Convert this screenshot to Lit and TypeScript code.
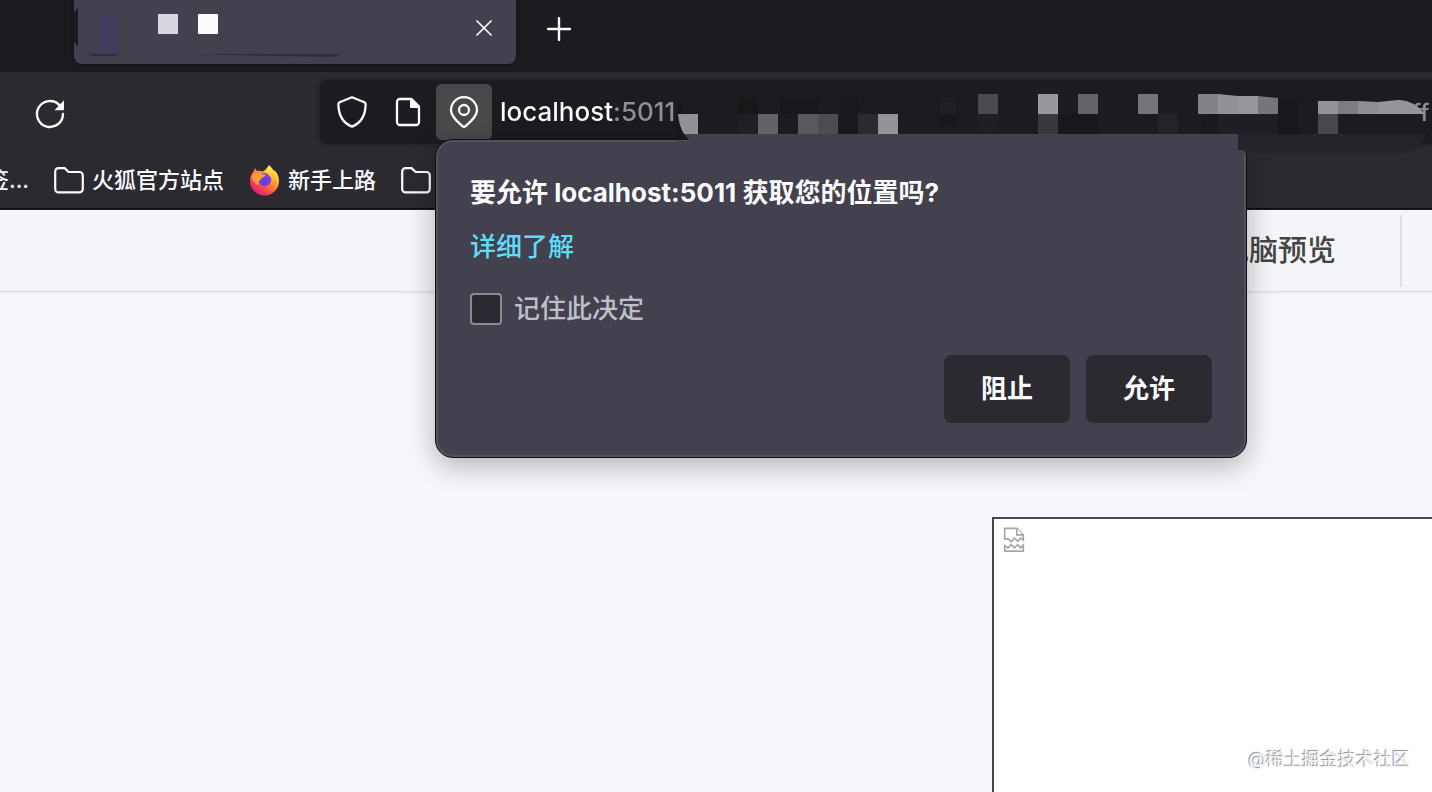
import { LitElement, html, svg, css } from "lit";
import { customElement, state } from "lit/decorators.js";

type Cell = [x: number, y: number, w: number, h: number, fill: string];

/* Mosaic cells that hide the rest of the address. */
const CELLS: Cell[] = [
  [738, 98, 20, 16, "#18181b"],
  [738, 114, 20, 20, "#202024"],
  [758, 114, 20, 20, "#636367"],
  [780, 98, 38, 16, "#18181c"],
  [798, 114, 20, 20, "#5a5a5e"],
  [818, 114, 20, 20, "#4d4d51"],
  [840, 98, 18, 36, "#19191d"],
  [858, 114, 20, 20, "#2b2b2f"],
  [878, 114, 20, 20, "#929297"],
  [940, 98, 16, 16, "#202024"],
  [940, 114, 16, 12, "#18181c"],
  [978, 94, 20, 20, "#49494e"],
  [978, 114, 20, 20, "#1f1e23"],
  [1038, 94, 20, 20, "#97979c"],
  [1038, 114, 20, 20, "#38383c"],
  [1058, 114, 40, 20, "#17171c"],
  [1078, 94, 20, 20, "#636368"],
  [1138, 94, 20, 20, "#74747a"],
  [1158, 114, 20, 20, "#242428"],
  [1202, 114, 16, 20, "#19191e"],
  [1218, 114, 60, 20, "#1e1e24"],
  [1278, 100, 20, 34, "#18181c"],
  [1318, 114, 20, 20, "#47474c"],
  [1338, 114, 82, 20, "#1b1b20"],
];

const folderIcon = html`<svg class="folder" viewBox="0 0 30 27" aria-hidden="true">
  <path d="M1.2 22V4.4A3.2 3.2 0 0 1 4.4 1.2H10.6L14.6 5H25.4A3.4 3.4 0 0 1 28.8 8.4V22A3.4 3.4 0 0 1 25.4 25.4H4.6A3.4 3.4 0 0 1 1.2 22Z"
    fill="none" stroke="#fbfbfe" stroke-width="2.2"/></svg>`;

const firefoxIcon = html`<svg class="firefox" viewBox="0 0 32 32" aria-hidden="true">
  <defs>
    <linearGradient id="flame" x1="0.85" y1="0.1" x2="0.2" y2="0.95">
      <stop offset="0.05" stop-color="#fff44f"/><stop offset="0.35" stop-color="#ffa02e"/>
      <stop offset="0.62" stop-color="#ff5a3c"/><stop offset="1" stop-color="#e31587"/>
    </linearGradient>
    <radialGradient id="globe" cx="0.4" cy="0.6" r="0.7">
      <stop offset="0" stop-color="#5b3fd6"/><stop offset="0.6" stop-color="#7542e5"/><stop offset="1" stop-color="#b833e1"/>
    </radialGradient>
    <linearGradient id="tail" x1="0.5" y1="0" x2="0.5" y2="1">
      <stop offset="0" stop-color="#fff44f"/><stop offset="0.6" stop-color="#ffb82e"/><stop offset="1" stop-color="#ff7139"/>
    </linearGradient>
  </defs>
  <path d="M20.6 0.8C23 3 24.4 5.2 25 7.4C25.6 6.8 25.6 6 25.5 5.4C29 8.2 31 12.6 31 17A15 15 0 0 1 1 17C1 12.8 2.6 9 5.2 6.4C5.4 5.2 5.8 4.4 6.4 3.6C6.6 5 7.4 6.2 8.4 6.8C10.4 6.2 12.4 6.6 13.8 7.4C16 5.8 19.2 4.8 20.6 0.8Z" fill="url(#flame)"/>
  <circle cx="16.2" cy="15.6" r="6.8" fill="url(#globe)"/>
  <path d="M20.6 0.8C25.6 4.8 28.8 10.2 27.4 17C26.6 20 25 22 22.6 23.2C24.8 19.8 24.8 15.6 22 12.6C19.4 10 17.2 8.6 17.6 5.8C18 3.8 19.6 2.6 20.6 0.8Z" fill="url(#tail)"/>
  <path d="M2.6 12C5.4 8.6 9.4 8.4 12.4 9.8C14 10.4 15.6 10.2 17.2 10.6C17 12.4 15 13 13.4 13.6C12.2 14.2 12.4 15.6 11.2 16.4C10 17 9.6 19 11 21C7.4 21.4 3.4 18 2.6 12Z" fill="#ff9a35"/>
</svg>`;

@customElement("app-root")
export class AppRoot extends LitElement {
  @state() private remember = false;

  static styles = css`
    :host {
      display: block;
      color: #fbfbfe;
      font-family: Inter, "Noto Sans CJK SC", sans-serif;
    }
    * { box-sizing: border-box; }
    svg { display: block; flex: none; }
    button { margin: 0; padding: 0; border: 0; font: inherit; color: inherit; background: none; }
    a { color: inherit; text-decoration: none; }
    .window { min-height: 100vh; display: flex; flex-direction: column; position: relative; overflow: hidden; background: #f6f7fa; }

    .tabs { height: 72px; padding-left: 74px; display: flex; align-items: flex-start; gap: 24px; background: #1c1b20; }
    .tab { position: relative; width: 442px; height: 64px; padding: 0 20px; display: flex; justify-content: flex-end; border-radius: 0 0 8px 8px; background: #42414d; box-shadow: 0 0 4px #101014; }
    .tab-smear { position: absolute; left: 0; top: 0; width: 280px; height: 64px; }
    .close, .new-tab { display: grid; place-items: center; }
    .close { width: 24px; height: 56px; }
    .new-tab { width: 38px; height: 58px; }
    .close svg { width: 16px; height: 16px; }
    .new-tab svg { width: 24px; height: 24px; }

    .nav { height: 80px; padding: 8px 0 8px 34px; display: flex; justify-content: space-between; align-items: center; gap: 254px; background: #2b2a31; }
    .reload { padding-top: 4px; }
    .reload svg { width: 32px; height: 32px; }
    .address { flex: 1; height: 64px; padding: 4px 0 4px 4px; display: flex; align-items: center; border-radius: 8px 0 0 8px; background: #1c1b20; box-shadow: 0 0 4px #1c1b20; }
    .tool { width: 56px; height: 56px; display: grid; place-items: center; border-radius: 6px; }
    .tool svg { width: 32px; height: 32px; }
    .tool.active { background: #49494c; }
    .url { flex: 1; min-width: 0; margin: 0 0 0 8px; padding: 0; border: 0; outline: 0; height: 56px; font: 500 26px/56px Inter, sans-serif; color: transparent; background: linear-gradient(90deg, #fbfbfe 113px, #8f8f95 113px); background-clip: text; -webkit-background-clip: text; }
    .url-end { width: 20px; font-size: 24px; font-weight: 500; color: #8f8f95; white-space: nowrap; }

    .bookmarks { height: 58px; display: flex; align-items: flex-start; gap: 25px; border-bottom: 2px solid #0d0c11; background: #2b2a31; font-size: 22px; font-weight: 500; line-height: 58px; white-space: nowrap; overflow: hidden; }
    .bookmark { display: flex; align-items: center; gap: 8px; height: 56px; }
    .first { width: 29px; justify-content: flex-end; }
    .folder { width: 30px; height: 27px; }
    .firefox { width: 31px; height: 32px; }

    .page { flex: 1; display: flex; flex-direction: column; color: #444; }
    .page-bar { height: 82px; padding-right: 30px; display: flex; justify-content: flex-end; align-items: center; gap: 64px; border-bottom: 1px solid #dcdee2; background: #f3f5f9; box-shadow: 0 1px 2px #e6e8eb; font-size: 29px; font-weight: 500; }
    .page-bar a { padding-bottom: 6px; }
    .divider { width: 2px; height: 72px; background: #dcdfe3; }
    .stage { flex: 1; display: flex; justify-content: flex-end; padding-top: 225px; }
    .frame { width: 440px; padding: 8px; border: solid #48484a; border-width: 2px 0 0 2px; background: #fff; }
    .frame svg { width: 24px; height: 26px; }

    .popup { position: absolute; left: 435px; top: 139px; width: 812px; padding: 34px; border: 1px solid #111015; border-radius: 18px; background: #42414d; box-shadow: inset 0 0 0 2px #52525b, 0 8px 28px rgba(0, 0, 0, 0.28); font-size: 26px; font-weight: 500; line-height: 38px; }
    .popup h1 { margin: 0; font-size: 26px; line-height: 38px; font-weight: 700; }
    .more { display: block; width: max-content; margin-top: 16px; color: #5fdcfa; }
    .remember { display: flex; align-items: center; gap: 12px; width: max-content; margin-top: 24px; color: #bfbfc9; }
    .remember input { appearance: none; width: 32px; height: 32px; margin: 0; border: 2px solid #8b8a95; border-radius: 4px; background: #2b2a33; }
    .remember input:checked { background: #5fdcfa; }
    .actions { display: flex; justify-content: flex-end; gap: 16px; margin-top: 27px; }
    .actions button { width: 126px; height: 68px; border-radius: 8px; background: #2b2a31; font-weight: 700; }

    .mosaic { position: absolute; left: 660px; top: 80px; width: 772px; height: 80px; pointer-events: none; }
    .watermark { position: absolute; right: 22px; bottom: 18px; font-size: 18px; line-height: 28px; color: #f4f4f4; text-shadow: -1px -1px 1px #8a8a8a; }
  `;

  render() {
    return html`
      <div class="window">
        <header>
          <div class="tabs">
            <div class="tab">
              <svg class="tab-smear" viewBox="0 0 280 64" aria-hidden="true">
                <path d="M0 12L4 8V46L0 42Z" fill="#1c1b20"/>
                <rect x="24" y="14" width="20" height="39" fill="#45386b" opacity="0.5"/>
                <path d="M12 54H46L40 56H20ZM110 54H268L258 57Z" fill="#2f2e3a"/>
                <rect x="84" y="14" width="20" height="20" fill="#d8d7df"/>
                <rect x="124" y="14" width="20" height="20" fill="#fbfbfe"/>
              </svg>
              <button class="close" aria-label="关闭标签页">
                <svg viewBox="0 0 16 16"><path d="M1 1L15 15M15 1L1 15" stroke="#fbfbfe" stroke-width="1.7" stroke-linecap="round"/></svg>
              </button>
            </div>
            <button class="new-tab" aria-label="新建标签页">
              <svg viewBox="0 0 24 24"><path d="M12 1V23M1 12H23" stroke="#fbfbfe" stroke-width="2.4" stroke-linecap="round"/></svg>
            </button>
          </div>
          <div class="nav">
            <button class="reload" aria-label="重新载入">
              <svg viewBox="0 0 32 32"><path d="M29 16A13 13 0 1 1 25.2 6.8" fill="none" stroke="#fbfbfe" stroke-width="2.4" stroke-linecap="round"/><path d="M30 2.2V11.2A1 1 0 0 1 29 12.2H20.5Z" fill="#fbfbfe"/></svg>
            </button>
            <div class="address">
              <button class="tool" aria-label="跟踪保护">
                <svg viewBox="0 0 32 32"><path d="M16 1.2L28.4 6.3Q29.7 7 29.6 8.6C29.4 17.5 26.5 26.5 16 30.6C5.5 26.5 2.6 17.5 2.4 8.6Q2.3 7 3.6 6.3Z" fill="none" stroke="#fbfbfe" stroke-width="2.3" stroke-linejoin="round"/></svg>
              </button>
              <button class="tool" aria-label="网站信息">
                <svg viewBox="0 0 32 32"><path d="M8 3H19L27 11V26A3 3 0 0 1 24 29H8A3 3 0 0 1 5 26V6A3 3 0 0 1 8 3Z" fill="none" stroke="#fbfbfe" stroke-width="2.3"/><path d="M18 2H20L28 10V12H19A1 1 0 0 1 18 11Z" fill="#fbfbfe"/></svg>
              </button>
              <button class="tool active" aria-label="位置权限">
                <svg viewBox="0 0 32 32"><path d="M16 1.2A13 13 0 0 1 29 14.2C29 20.5 22.5 25.5 17.5 30.2Q16 31.3 14.5 30.2C9.5 25.5 3 20.5 3 14.2A13 13 0 0 1 16 1.2Z" fill="none" stroke="#fbfbfe" stroke-width="2.3"/><circle cx="16" cy="14" r="5" fill="none" stroke="#fbfbfe" stroke-width="2.3"/></svg>
              </button>
              <input class="url" type="text" aria-label="地址" value="localhost:5011" spellcheck="false">
              <span class="url-end">ff</span>
            </div>
          </div>
          <nav class="bookmarks">
            <a class="bookmark first" href="#">签...</a>
            <a class="bookmark" href="#">${folderIcon}火狐官方站点</a>
            <a class="bookmark" href="#">${firefoxIcon}新手上路</a>
            <a class="bookmark" href="#" aria-label="书签文件夹">${folderIcon}</a>
          </nav>
        </header>
        <main class="page">
          <div class="page-bar"><a href="#">电脑预览</a><span class="divider"></span></div>
          <div class="stage">
            <div class="frame">
              <svg viewBox="0 0 24 28" role="img" aria-label="图片">
                <g fill="#fff" stroke="#a5a5a5" stroke-width="1.8">
                  <path d="M2 13V1.5H15L22 8.5V14L19 12L16 15.5L12.5 12L9 16L5.5 12.5Z"/>
                  <path d="M15 1.5V8.5H22"/>
                  <path d="M2 26V20L5.5 22.5L9 19L12.5 22.5L16 19L19 22.5L22 19.5V26Z"/>
                </g>
              </svg>
            </div>
          </div>
        </main>

        <section class="popup" role="dialog" aria-labelledby="ask">
          <h1 id="ask">要允许 localhost:5011 获取您的位置吗?</h1>
          <a class="more" href="#">详细了解</a>
          <label class="remember">
            <input type="checkbox" .checked=${this.remember}
              @change=${(e: Event) => (this.remember = (e.target as HTMLInputElement).checked)}>
            记住此决定
          </label>
          <div class="actions"><button>阻止</button><button>允许</button></div>
        </section>

        <svg class="mosaic" viewBox="660 80 772 80" aria-hidden="true">
          <path d="M690 128H1238V150H1244V156H676V141H690L684 134Z" fill="#42414d"/>
          <rect x="684" y="100" width="554" height="34" fill="#1c1b20"/>
          <path d="M1238 134H1426Q1420 153 1402 153H1262Q1250 150 1238 150Z" fill="#242329"/>
          <path d="M678 104L682 104V118Q680 130 688 140H676Z" fill="#17161b"/>
          <path d="M678 114H698V134H684Q679 126 678 114Z" fill="#909095"/>
          ${CELLS.map(([x, y, w, h, fill]) => svg`<rect x=${x} y=${y} width=${w} height=${h} fill=${fill}/>`)}
          <path d="M1198 94H1218V114H1198Z" fill="#828287"/>
          <path d="M1218 94L1238 96V114H1218Z" fill="#919196"/>
          <path d="M1238 96H1258V114H1238Z" fill="#98989c"/>
          <path d="M1258 96L1278 98V114H1258Z" fill="#75757a"/>
          <path d="M1318 101H1338V114H1318Z" fill="#929297"/>
          <path d="M1338 101H1358V114H1338Z" fill="#7c7c81"/>
          <path d="M1358 101L1378 102V114H1358Z" fill="#8e8e93"/>
          <path d="M1378 102L1398 100Q1412 99 1425 114H1378Z" fill="#96969a"/>
        </svg>
        <div class="watermark">@稀土掘金技术社区</div>
      </div>
    `;
  }
}
